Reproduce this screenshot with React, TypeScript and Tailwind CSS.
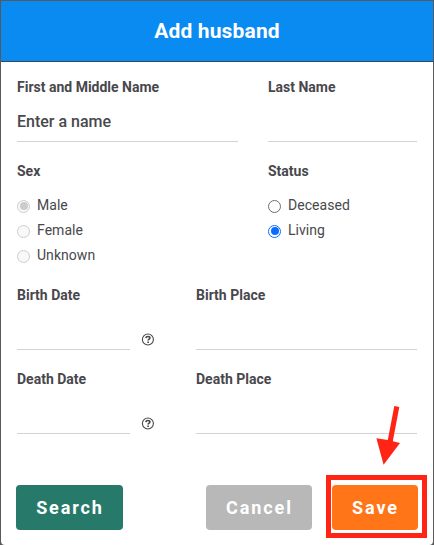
import type { ReactNode } from "react";

const labelClass = "h-5 text-[14px] leading-5 font-bold text-[#48484c]";

function Field({ label, value, className = "" }: { label: string; value?: string; className?: string }) {
  return (
    <label className={`block ${className}`}>
      <span className={`block whitespace-nowrap ${labelClass}`}>{label}</span>
      <input
        type="text"
        defaultValue={value}
        className="block h-[45px] w-full border-b border-[#d2d4d4] pt-[5px] text-[16px] font-medium text-[#48484c] outline-none"
      />
    </label>
  );
}

function Radio({ label, checked, disabled }: { label: string; checked?: boolean; disabled?: boolean }) {
  let ring = "border-[#6f6f6f] bg-white";
  let dot = "bg-[#0a6cff]";
  if (checked) ring = "border-[#0a6cff] bg-white";
  if (disabled) {
    ring = "border-[#cdcdcd] bg-[#f8f8f8]";
    dot = "bg-[#cbcbcb]";
  }
  return (
    <div className="flex h-[25px] items-center gap-[7px]">
      <span className={`mt-px grid size-[13px] shrink-0 place-items-center rounded-full border ${ring}`}>
        {checked && <span className={`size-[8px] rounded-full ${dot}`} />}
      </span>
      <span className="pb-px text-[14px] leading-5 tracking-[0.04px] text-[#48484c]">{label}</span>
    </div>
  );
}

function RadioGroup({ label, className = "", children }: { label: string; className?: string; children: ReactNode }) {
  return (
    <div className={className}>
      <div className={labelClass}>{label}</div>
      <div className="mt-3">{children}</div>
    </div>
  );
}

function HelpIcon() {
  return (
    <svg viewBox="0 0 13 13" className="mb-1 ml-[11px] size-[13px] shrink-0" fill="none" stroke="#48484c">
      <circle cx="6.9" cy="6.5" r="5.5" strokeWidth="1.1" />
      <path d="M4.9 5.1C5 4 5.8 3.5 6.9 3.5S8.9 4.1 8.9 5c0 1.2-1.8 1.2-1.8 2.6" strokeWidth="1.6" />
      <path d="M6.3 9.2h1.6" strokeWidth="1.4" />
    </svg>
  );
}

function DateRow({ event }: { event: string }) {
  return (
    <div className="flex">
      <div className="flex w-[179px] items-end">
        <Field label={`${event} Date`} className="w-[113px]" />
        <HelpIcon />
      </div>
      <Field label={`${event} Place`} className="flex-1" />
    </div>
  );
}

function Button({ className, children }: { className: string; children: ReactNode }) {
  return (
    <button className={`h-[45px] rounded-[4px] pl-px text-[18px] font-bold tracking-[1.9px] text-white ${className}`}>
      {children}
    </button>
  );
}

export default function App() {
  return (
    <div className="h-[545px] w-[434px] overflow-hidden bg-[#59595c] px-px pt-px font-[Roboto,sans-serif]">
      <div className="flex h-[544px] flex-col overflow-hidden rounded-b-[4px] bg-white">
        <header className="flex h-[61px] shrink-0 items-center justify-center border-b border-[#37475a] bg-[#0a8bf2]">
          <h1 className="pt-[2px] text-[21px] font-bold tracking-[0.15px] text-white">Add husband</h1>
        </header>

        <div className="px-4 pt-[15px]">
          <div className="flex justify-between">
            <Field label="First and Middle Name" value="Enter a name" className="w-[221px]" />
            <Field label="Last Name" className="w-[149px]" />
          </div>

          <div className="mt-[19px] flex justify-between">
            <RadioGroup label="Sex">
              <Radio label="Male" checked disabled />
              <Radio label="Female" disabled />
              <Radio label="Unknown" disabled />
            </RadioGroup>
            <RadioGroup label="Status" className="w-[149px]">
              <Radio label="Deceased" />
              <Radio label="Living" checked />
            </RadioGroup>
          </div>

          <div className="mt-[17px] space-y-[19px]">
            <DateRow event="Birth" />
            <DateRow event="Death" />
          </div>
        </div>

        <div className="mt-[51px] flex pr-[15px] pl-[15px]">
          <Button className="w-[107px] bg-[#277a6a]">Search</Button>
          <Button className="mr-5 ml-auto w-[106px] bg-[#b8b8b8]">Cancel</Button>
          <div className="relative">
            <Button className="w-[86px] bg-[#ff7518]">Save</Button>
            {/* Callout frame and arrow */}
            <div className="pointer-events-none absolute -top-[10px] -right-[9px] -bottom-2 -left-[6.5px] border-[5px] border-[#ff2414]" />
            <svg viewBox="0 0 30 62" className="pointer-events-none absolute -top-[81px] left-11 h-[62px] w-[30px]">
              <path d="M18.3 2l5 .9-6.5 34.4 7.2 1.6L7.6 60.8.4 34.2l11.4 1.9z" fill="#ff2414" />
            </svg>
          </div>
        </div>
      </div>
    </div>
  );
}
